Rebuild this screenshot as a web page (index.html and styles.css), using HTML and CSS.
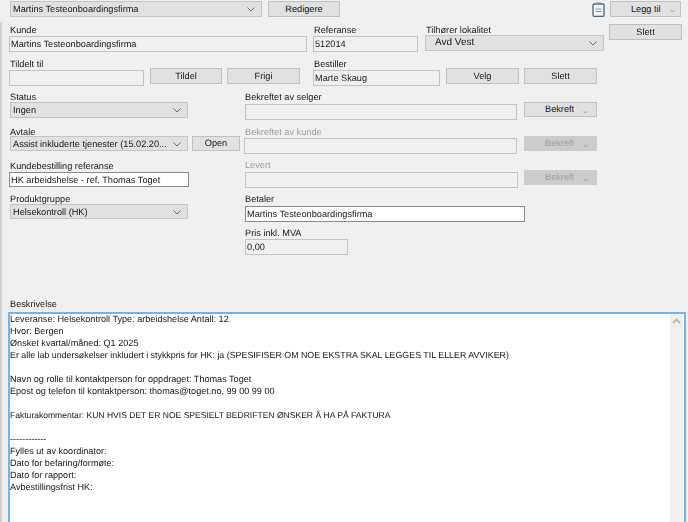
FILE: index.html
```html
<!DOCTYPE html>
<html lang="no">
<head>
<meta charset="utf-8">
<title>Ordre</title>
<link rel="stylesheet" href="styles.css">
</head>
<body>
<div class="page">
  <div class="toolbar">
    <div class="combo w252"><span class="combo-text">Martins Testeonboardingsfirma</span><svg class="chev" viewBox="0 0 8 5"><path d="M.5.5 4 4 7.500.5"/></svg></div>
    <button class="btn w72 ml6">Redigere</button>
    <svg class="clip" viewBox="0 0 13 15"><rect x="1" y="2" width="11" height="12.300" rx="1" fill="#f4f7f9" stroke="#4f6678" stroke-width="1.300"/><rect x="4" y=".5" width="5" height="2.500" fill="#7b8b98"/><path d="M3.500 7h6M3.500 9.500h6" stroke="#4ea3e0" stroke-width="1"/></svg>
    <button class="btn split w71 ml5"><span>Legg til</span><svg class="drop" viewBox="0 0 5 2"><path d="M.5.300 2.500 1.700 4.500.300"/></svg></button>
  </div>
  <div class="frame">
    <div class="row row-b">
      <div class="field w298"><label class="lbl">Kunde</label><input class="inp" readonly value="Martins Testeonboardingsfirma"></div>
      <div class="field w105 ml6"><label class="lbl">Referanse</label><input class="inp" readonly value="512014"></div>
      <div class="field w179 ml7"><label class="lbl">Tilhører lokalitet</label><div class="combo up1"><span class="combo-text indent">Avd Vest</span><svg class="chev" viewBox="0 0 8 5"><path d="M.5.5 4 4 7.500.5"/></svg></div></div>
      <button class="btn w73 ml5">Slett</button>
    </div>
    <div class="row row-c">
      <div class="field w135"><label class="lbl">Tildelt til</label><input class="inp" readonly></div>
      <button class="btn w72 ml6 mt10">Tildel</button>
      <button class="btn w73 ml5 mt10">Frigi</button>
      <div class="field w127 ml13"><label class="lbl">Bestiller</label><input class="inp" readonly value="Marte Skaug"></div>
      <button class="btn w73 ml6 mt10">Velg</button>
      <button class="btn w73 ml5 mt10">Slett</button>
    </div>
    <div class="columns">
      <div class="col-left">
        <div class="field"><label class="lbl">Status</label><div class="combo w178 up1 ml1"><span class="combo-text">Ingen</span><svg class="chev" viewBox="0 0 8 5"><path d="M.5.5 4 4 7.500.5"/></svg></div></div>
        <div class="field mt8"><label class="lbl">Avtale</label>
          <div class="row up2 ml1"><div class="combo w178 h15"><span class="combo-text">Assist inkluderte tjenester (15.02.20...</span><svg class="chev" viewBox="0 0 8 5"><path d="M.5.5 4 4 7.500.5"/></svg></div><button class="btn w48 ml4 h15">Open</button></div>
        </div>
        <div class="field mt9"><label class="lbl">Kundebestilling referanse</label><input class="inp active w180 h15" value="HK arbeidshelse - ref. Thomas Toget"></div>
        <div class="field mt6"><label class="lbl">Produktgruppe</label><div class="combo w178 h15 up1 ml1"><span class="combo-text">Helsekontroll (HK)</span><svg class="chev" viewBox="0 0 8 5"><path d="M.5.5 4 4 7.500.5"/></svg></div></div>
      </div>
      <div class="col-right">
        <div class="row">
          <div class="field w272"><label class="lbl">Bekreftet av selger</label><input class="inp mt1" readonly></div>
          <button class="btn split w73 ml7 mt11 h15"><span>Bekreft</span><svg class="drop" viewBox="0 0 5 2"><path d="M.5.300 2.500 1.700 4.500.300"/></svg></button>
        </div>
        <div class="row mt6">
          <div class="field w273 out1"><label class="lbl off ml1">Bekreftet av kunde</label><input class="inp" readonly></div>
          <button class="btn split off-btn w73 ml7 mt10 h15"><span>Bekreft</span><svg class="drop" viewBox="0 0 5 2"><path d="M.5.300 2.500 1.700 4.500.300"/></svg></button>
        </div>
        <div class="row mt5">
          <div class="field w273"><label class="lbl off">Levert</label><input class="inp mt1" readonly></div>
          <button class="btn split off-btn w73 ml6 mt11 h15"><span>Bekreft</span><svg class="drop" viewBox="0 0 5 2"><path d="M.5.300 2.500 1.700 4.500.300"/></svg></button>
        </div>
        <div class="field w280 mt5"><label class="lbl">Betaler</label><input class="inp active mt1" value="Martins Testeonboardingsfirma"></div>
        <div class="field w103 mt5"><label class="lbl">Pris inkl. MVA</label><input class="inp" readonly value="0,00"></div>
      </div>
    </div>
    <div class="desc">
      <label class="lbl">Beskrivelse</label>
      <div class="memo">
        <div class="memo-text">Leveranse: Helsekontroll Type: arbeidshelse Antall: 12
Hvor: Bergen
Ønsket kvartal/måned: Q1 2025
<span class="tight">Er alle lab undersøkelser inkludert i stykkpris for HK: ja (SPESIFISER OM NOE EKSTRA SKAL LEGGES TIL ELLER AVVIKER)</span>

Navn og rolle til kontaktperson for oppdraget: Thomas Toget
Epost og telefon til kontaktperson: thomas@toget.no, 99 00 99 00

<span class="tighter">Fakturakommentar: KUN HVIS DET ER NOE SPESIELT BEDRIFTEN ØNSKER Å HA PÅ FAKTURA</span>

------------
Fylles ut av koordinator:
Dato for befaring/formøte:
Dato for rapport:
Avbestillingsfrist HK:</div>
        <div class="scroll"><svg class="scroll-up" viewBox="0 0 9 6"><path d="M1 5 4.500 1.500 8 5"/></svg></div>
      </div>
    </div>
  </div>
</div>
</body>
</html>
```
FILE: styles.css
```css
* { box-sizing: border-box; }
html, body { margin: 0; height: 522px; overflow: hidden; background: #f0f0f0; }
.page {
  width: 688px; height: 522px; overflow: hidden;
  font: 9.200px/12px "Liberation Sans", Arial, sans-serif;
  text-rendering: geometricPrecision;
  color: #141414;
  filter: blur(0.35px);
}
.toolbar { display: flex; height: 22px; padding: 1px 0 0 10px; align-items: flex-start; }
.frame { border-left: 2px solid #d2d2d2; padding-left: 7px; height: 500px; }
.row { display: flex; align-items: flex-start; }
.row-b { padding-top: 2px; }
.row-c { margin-top: 6px; }
.columns { display: flex; margin-top: 5px; }
.col-left { width: 236px; flex: none; }
.col-right { display: flex; flex-direction: column; }
.col-right .lbl { padding-left: 0; }
.field { display: flex; flex-direction: column; flex: none; }
.lbl { display: block; height: 12px; line-height: 12px; padding-left: 1px; white-space: nowrap; }
.off { color: #9a9a9a; }

.inp {
  display: block; width: 100%; height: 16px; margin: 0; padding: 0 1px;
  font: inherit; text-rendering: inherit; color: #141414; background: #f0f0f0;
  border: 1.500px solid #c3c3c3; outline: none;
}
.active { background: #fff; border-color: #8a8a8a; }

.combo {
  display: flex; align-items: center; justify-content: space-between;
  height: 16px; padding: 0 6px 0 2px; flex: none;
  background: #e1e1e1; border: 1px solid #c4c4c4;
}
.combo-text { white-space: nowrap; }
.indent { padding-left: 7px; font-size: 10px; }
.chev { width: 8px; height: 5px; margin-top: 1px; }
.chev path { fill: none; stroke: #6a6a6a; stroke-width: 1; }

.btn {
  display: flex; align-items: center; justify-content: center;
  height: 16px; padding: 0 0 1px; margin: 0; flex: none;
  font: inherit; text-rendering: inherit; color: #141414;
  background: #e1e1e1; border: 1.500px solid #c0c0c0; border-radius: 0;
}
.split { justify-content: flex-start; gap: 9px; padding-left: 20px; }
.drop { width: 5px; height: 2px; margin-top: 5px; }
.drop path { fill: none; stroke: #9a9a9a; stroke-width: 1; }
.off-btn { background: #cccccc; border-color: #cccccc; color: #a0a0a0; }

.clip { width: 13px; height: 15px; margin: 1px 0 0 252px; flex: none; }

.desc { margin-top: 43px; }
.memo {
  display: flex; width: 678px; height: 215px; margin-top: 2px;
  background: #fff; border: 2px solid #74b3e8; border-bottom: 0;
  margin-left: -1px;
}
.memo-text { flex: 1; font-size: 9.100px; white-space: pre; line-height: 12px; overflow: hidden; margin-top: -1px; }
.tight { font-size: 8.850px; }
.tighter { font-size: 8.550px; }
.scroll { width: 13px; flex: none; margin-right: 1px; background: #f0f0f0; display: flex; justify-content: center; padding-top: 4px; }
.scroll-up { width: 9px; height: 6px; }
.scroll-up path { fill: none; stroke: #b4b4b4; stroke-width: 1.800; }

.w48 { width: 48px; } .w71 { width: 71px; } .w72 { width: 72px; } .w73 { width: 73px; }
.w103 { width: 103px; } .w105 { width: 105px; } .w127 { width: 127px; } .w135 { width: 135px; }
.w178 { width: 178px; } .w179 { width: 179px; } .w180 { width: 180px; } .w252 { width: 252px; }
.w272 { width: 272px; } .w273 { width: 273px; } .w280 { width: 280px; } .w298 { width: 298px; }
.h15 { height: 15px; }
.ml1 { margin-left: 1px; } .ml4 { margin-left: 4px; } .ml5 { margin-left: 5px; } .ml6 { margin-left: 6px; }
.ml7 { margin-left: 7px; } .ml13 { margin-left: 13px; }
.mt1 { margin-top: 1px; } .mt5 { margin-top: 5px; } .mt6 { margin-top: 6px; } .mt8 { margin-top: 8px; }
.mt9 { margin-top: 9px; } .mt10 { margin-top: 10px; } .mt11 { margin-top: 11px; }
.up1 { margin-top: -1px; } .up2 { margin-top: -2px; }
.out1 { margin-left: -1px; }
```
